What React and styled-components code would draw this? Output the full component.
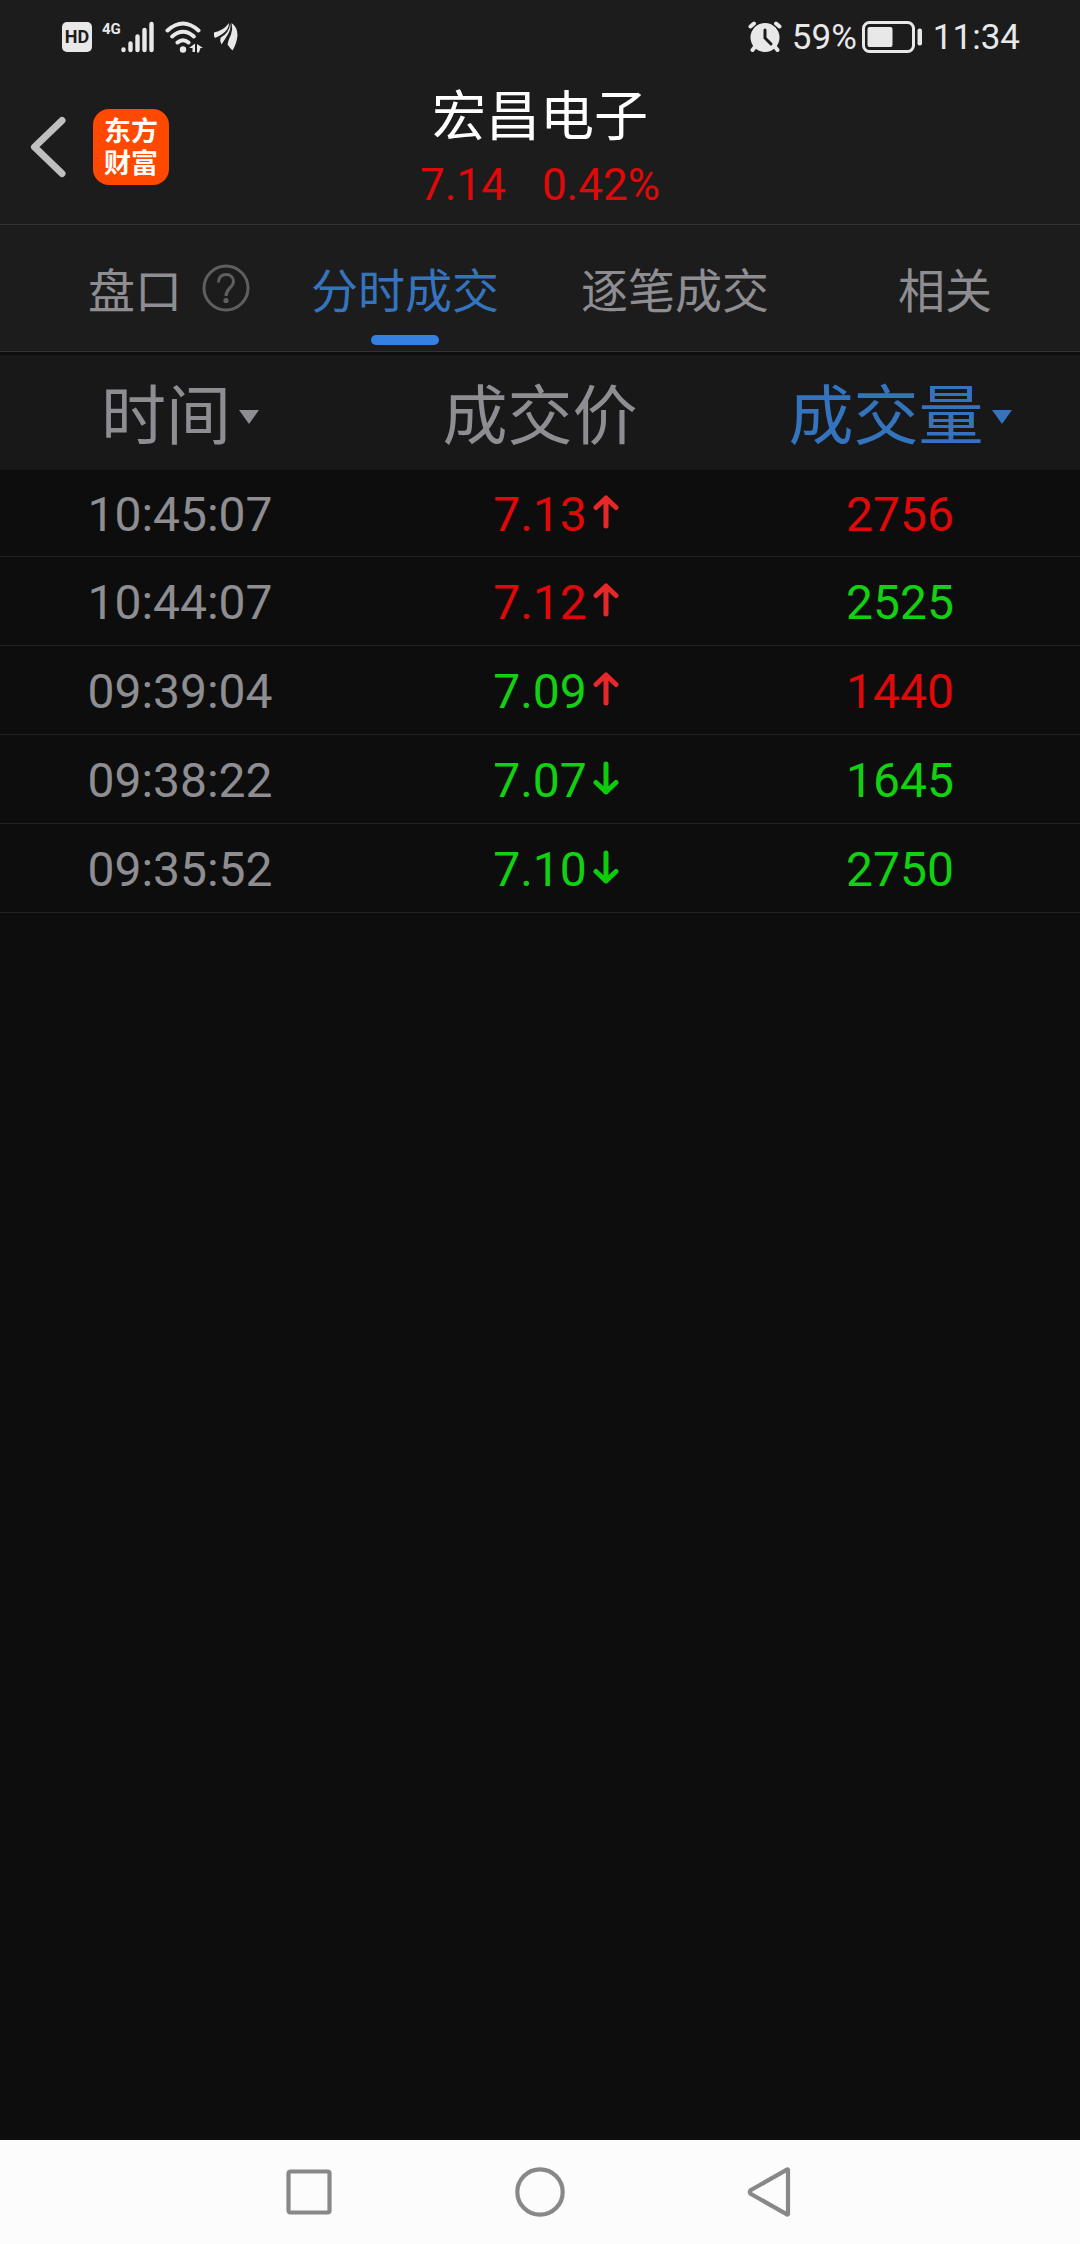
import { useState } from "react";
import styled, { createGlobalStyle } from "styled-components";

const RED = "#e00808";
const GREEN = "#12d012";

const TABS = ["盘口", "分时成交", "逐笔成交", "相关"];

const TRADES = [
  { time: "10:45:07", price: "7.13", priceColor: RED, up: true, volume: 2756, volumeColor: RED },
  { time: "10:44:07", price: "7.12", priceColor: RED, up: true, volume: 2525, volumeColor: GREEN },
  { time: "09:39:04", price: "7.09", priceColor: GREEN, up: true, volume: 1440, volumeColor: RED },
  { time: "09:38:22", price: "7.07", priceColor: GREEN, up: false, volume: 1645, volumeColor: GREEN },
  { time: "09:35:52", price: "7.10", priceColor: GREEN, up: false, volume: 2750, volumeColor: GREEN },
];

const SignalIcon = () => (
  <svg width="34" height="32" viewBox="0 0 34 32" stroke="#e8e8e8" strokeWidth="4.4" strokeLinecap="round">
    <path d="M2.500 28.400v.600M9.500 22.500V29M16.500 15.500V29M23.500 9V29M30.500 3V29" />
  </svg>
);

const WifiIcon = () => (
  <svg width="38" height="32" viewBox="0 0 38 32" fill="none" stroke="#e8e8e8" strokeWidth="4" strokeLinecap="round">
    <path d="M2.500 9.500Q18 -4.500 33.500 9.500M7.200 15.500Q18 6 28.800 15.500M12.500 21.500Q18 17 23.500 21.500" />
    <circle cx="18" cy="28.500" r="3.200" fill="#e8e8e8" stroke="none" />
    <path d="M30 22.500v8.500h-2.500v-4h-3.500zM32 31.500v-8.500l6 4h-2.500l-1.500 4.500z" fill="#e8e8e8" stroke="none" />
  </svg>
);

const FeatherIcon = () => (
  <svg width="26" height="30" viewBox="0 0 26 30" fill="#e8e8e8">
    <path d="M1 10.500Q10 9 16 1Q16 7 10 11.500Q5 15 2 16Q.500 14 1 10.500z" />
    <path d="M17.200 1.200Q18.500 7 14.500 13Q11.500 18 8.500 22.500Q6.500 19 7.500 15.800Q16.500 10.500 17.200 1.200z" />
    <path d="M18.600 1Q24.500 5 24.500 13Q24 21 19.500 28.500Q16.500 25.500 14.500 22.500Q15.500 17.500 18 12.500Q20 7 18.600 1z" />
  </svg>
);

const AlarmIcon = () => (
  <svg width="34" height="32" viewBox="0 0 34 32" fill="none" strokeLinecap="round">
    <circle cx="17" cy="16.500" r="14.500" fill="#e8e8e8" />
    <path d="M0 8.500L9.500 0M34 8.500L24.500 0" stroke="#1c1c1c" strokeWidth="4" />
    <path d="M2.500 5.500L6 2.500M31.500 5.500L28 2.500M6.500 26.500L4.500 29M27.500 26.500L29.500 29" stroke="#e8e8e8" strokeWidth="4" />
    <path d="M17 9v8l6 6" stroke="#1c1c1c" strokeWidth="3" />
  </svg>
);

const BatteryIcon = () => (
  <svg width="62" height="34" viewBox="0 0 62 34">
    <rect x="2.500" y="2.500" width="50" height="29" rx="6" fill="none" stroke="#e8e8e8" strokeWidth="3" />
    <rect x="6.500" y="7" width="25" height="20" rx="2" fill="#e8e8e8" />
    <rect x="56.500" y="8.500" width="4.500" height="17" rx="2" fill="#e8e8e8" />
  </svg>
);

const BackIcon = () => (
  <svg width="36" height="62" viewBox="0 0 36 62" fill="none" stroke="#bfbfbf" strokeWidth="7" strokeLinejoin="round" strokeLinecap="round">
    <path d="M32 4.500L4.500 31L32 57.500" />
  </svg>
);

const HelpIcon = () => (
  <svg width="48" height="48" viewBox="0 0 48 48" fill="none" stroke="#5f5f60" strokeWidth="3">
    <circle cx="24" cy="24" r="22" />
    <path d="M16.500 18.500C16.500 13 20 10.500 24 10.500C28.500 10.500 31.500 13.500 31.500 17.500C31.500 23.500 24 24 24 32" />
    <circle cx="24" cy="36.500" r="2.600" fill="#5f5f60" stroke="none" />
  </svg>
);

const TrendArrow = ({ up }) => (
  <svg width="26" height="40" viewBox="0 0 26 40" fill="none" stroke={up ? "#e82828" : "#0ccc0c"} strokeWidth="5" strokeLinecap="round" strokeLinejoin="round">
    <path d={up ? "M13 3V31M3 12.500L13 3L23 12.500" : "M13 3V31M3 21.500L13 31L23 21.500"} />
  </svg>
);

const SortArrow = () => (
  <svg width="20" height="14" viewBox="0 0 20 14" fill="currentColor">
    <path d="M0 0H20L10 14z" />
  </svg>
);

const App = () => {
  const [activeTab, setActiveTab] = useState("分时成交");

  return (
    <Page>
      <GlobalStyle />
      <StatusBar>
        <StatusGroup>
          <HdBadge>HD</HdBadge>
          <Network>
            <span>4G</span>
            <SignalIcon />
          </Network>
          <WifiIcon />
          <FeatherIcon />
        </StatusGroup>
        <StatusGroup>
          <AlarmIcon />
          <Battery>
            59%
            <BatteryIcon />
          </Battery>
          <span>11:34</span>
        </StatusGroup>
      </StatusBar>

      <Header>
        <HeaderLeft>
          <IconButton aria-label="返回">
            <BackIcon />
          </IconButton>
          <Logo href="#">
            东方
            <br />
            财富
          </Logo>
        </HeaderLeft>
        <div>
          <StockName>宏昌电子</StockName>
          <Quote>
            <span>7.14</span>
            <span>0.42%</span>
          </Quote>
        </div>
      </Header>

      <Tabs>
        {TABS.map((tab) => (
          <TabItem key={tab}>
            <TabButton $active={tab === activeTab} onClick={() => setActiveTab(tab)}>
              {tab}
            </TabButton>
            {tab === "盘口" && (
              <HelpButton aria-label="帮助">
                <HelpIcon />
              </HelpButton>
            )}
          </TabItem>
        ))}
      </Tabs>

      <Content>
        <TradeTable>
          <thead>
            <tr>
              <HeadCell>
                <SortButton>
                  时间
                  <SortArrow />
                </SortButton>
              </HeadCell>
              <HeadCell>成交价</HeadCell>
              <HeadCell>
                <SortButton $active>
                  成交量
                  <SortArrow />
                </SortButton>
              </HeadCell>
            </tr>
          </thead>
          <tbody>
            {TRADES.map((trade) => (
              <TradeRow key={trade.time}>
                <Cell>{trade.time}</Cell>
                <Cell $color={trade.priceColor}>
                  <Price>
                    <span>{trade.price}</span>
                    <TrendArrow up={trade.up} />
                  </Price>
                </Cell>
                <Cell $color={trade.volumeColor}>{trade.volume}</Cell>
              </TradeRow>
            ))}
          </tbody>
        </TradeTable>
      </Content>

      <NavBar>
        <IconButton aria-label="最近任务">
          <svg width="50" height="50" viewBox="0 0 50 50" fill="none" stroke="#888" strokeWidth="4.200">
            <rect x="4.500" y="4.500" width="41" height="41" rx="2" />
          </svg>
        </IconButton>
        <IconButton aria-label="主页">
          <svg width="50" height="50" viewBox="0 0 50 50" fill="none" stroke="#888" strokeWidth="4.200">
            <circle cx="25" cy="25" r="22.700" />
          </svg>
        </IconButton>
        <IconButton aria-label="返回上一页">
          <svg width="50" height="50" viewBox="0 0 50 50" fill="none" stroke="#888" strokeWidth="4.200" strokeLinejoin="round">
            <path d="M42 2.800V47.200Q41.500 48 40.500 47.200L5 27Q2.500 25 5 23L40.500 2.800Q41.500 2 42 2.800z" />
          </svg>
        </IconButton>
      </NavBar>
    </Page>
  );
};

export default App;

const GlobalStyle = createGlobalStyle`
  * {
    box-sizing: border-box;
  }

  body {
    margin: 0;
    background: #0d0d0d;
    font-family: Roboto, "Noto Sans CJK SC", sans-serif;
  }

  button {
    padding: 0;
    border: none;
    background: none;
    font: inherit;
    color: inherit;
    cursor: pointer;
  }

  svg {
    display: block;
    flex-shrink: 0;
  }
`;

const Page = styled.div`
  min-height: 100vh;
  display: flex;
  flex-direction: column;
`;

const StatusBar = styled.div`
  height: 74px;
  padding: 0 60px 0 62px;
  display: flex;
  justify-content: space-between;
  align-items: center;
  background: #1c1c1c;
  color: #e8e8e8;
  font-size: 35px;
`;

const StatusGroup = styled.div`
  display: flex;
  align-items: center;
  gap: 10px;
`;

const HdBadge = styled.span`
  width: 30px;
  height: 30px;
  border-radius: 5px;
  background: #e8e8e8;
  color: #1c1c1c;
  font-size: 18px;
  font-weight: 700;
  line-height: 30px;
  text-align: center;
`;

const Network = styled.div`
  display: flex;
  align-items: flex-start;

  span {
    font-size: 15px;
    font-weight: 700;
    line-height: 16px;
  }
`;

const Battery = styled.div`
  display: flex;
  align-items: center;
  gap: 4px;
`;

const Header = styled.header`
  height: 151px;
  padding: 0 30px 4px;
  display: grid;
  grid-template-columns: 1fr auto 1fr;
  align-items: center;
  background: #1c1c1c;
  border-bottom: 1px solid #333;
`;

const HeaderLeft = styled.div`
  display: flex;
  align-items: center;
  gap: 27px;
`;

const IconButton = styled.button`
  display: flex;
`;

const Logo = styled.a`
  width: 76px;
  height: 76px;
  padding-top: 7px;
  border-radius: 16px;
  background: #ff4800;
  color: #fff;
  font-size: 27px;
  font-weight: 700;
  line-height: 32px;
  text-align: center;
  text-decoration: none;
`;

const StockName = styled.h1`
  margin: 0;
  padding-top: 4px;
  color: #fff;
  font-size: 54px;
  font-weight: 400;
  line-height: 72px;
  text-align: center;
`;

const Quote = styled.div`
  display: flex;
  justify-content: center;
  gap: 36px;
  color: ${RED};
  font-size: 44px;
  line-height: 62px;
`;

const Tabs = styled.nav`
  height: 127px;
  display: grid;
  grid-template-columns: repeat(4, 1fr);
  background: #1c1c1c;
  border-bottom: 1px solid #333;
`;

const TabItem = styled.div`
  position: relative;
  display: flex;
  justify-content: center;
`;

const TabButton = styled.button`
  display: flex;
  flex-direction: column;
  align-items: center;
  justify-content: space-between;
  padding: 32px 0 6px;
  color: ${(props) => (props.$active ? "#3474bf" : "#8e8d92")};
  font-size: 47px;
  line-height: 70px;
  white-space: nowrap;

  &::after {
    content: "";
    width: 68px;
    height: 10px;
    border-radius: 5px;
    background: ${(props) => (props.$active ? "#3581e2" : "transparent")};
  }
`;

const HelpButton = styled.button`
  position: absolute;
  top: 39px;
  right: 20px;
`;

const Content = styled.main`
  flex: 1;
  padding-top: 3px;
`;

const TradeTable = styled.table`
  width: 100%;
  table-layout: fixed;
  border-collapse: collapse;
`;

const HeadCell = styled.th`
  height: 115px;
  padding: 8px 0 0;
  background: #181818;
  color: #8e8d92;
  font-size: 65px;
  font-weight: 400;
  line-height: 80px;
`;

const SortButton = styled.button`
  display: inline-flex;
  align-items: center;
  gap: 8px;
  color: ${(props) => (props.$active ? "#3474bf" : "#8e8d92")};
`;

const TradeRow = styled.tr`
  height: 89px;
  border-bottom: 1px solid #222;

  &:first-child {
    height: 86px;
  }
`;

const Cell = styled.td`
  padding: 4px 0 0;
  color: ${(props) => props.$color || "#8e8d92"};
  font-size: 48px;
  line-height: 60px;
  text-align: center;
`;

const Price = styled.div`
  display: grid;
  grid-template-columns: 1fr auto 1fr;
  align-items: center;
  gap: 6px;

  span {
    grid-column: 2;
  }
`;

const NavBar = styled.footer`
  height: 104px;
  padding: 0 284px;
  display: flex;
  justify-content: space-between;
  align-items: center;
  background: #fcfcfc;
`;
